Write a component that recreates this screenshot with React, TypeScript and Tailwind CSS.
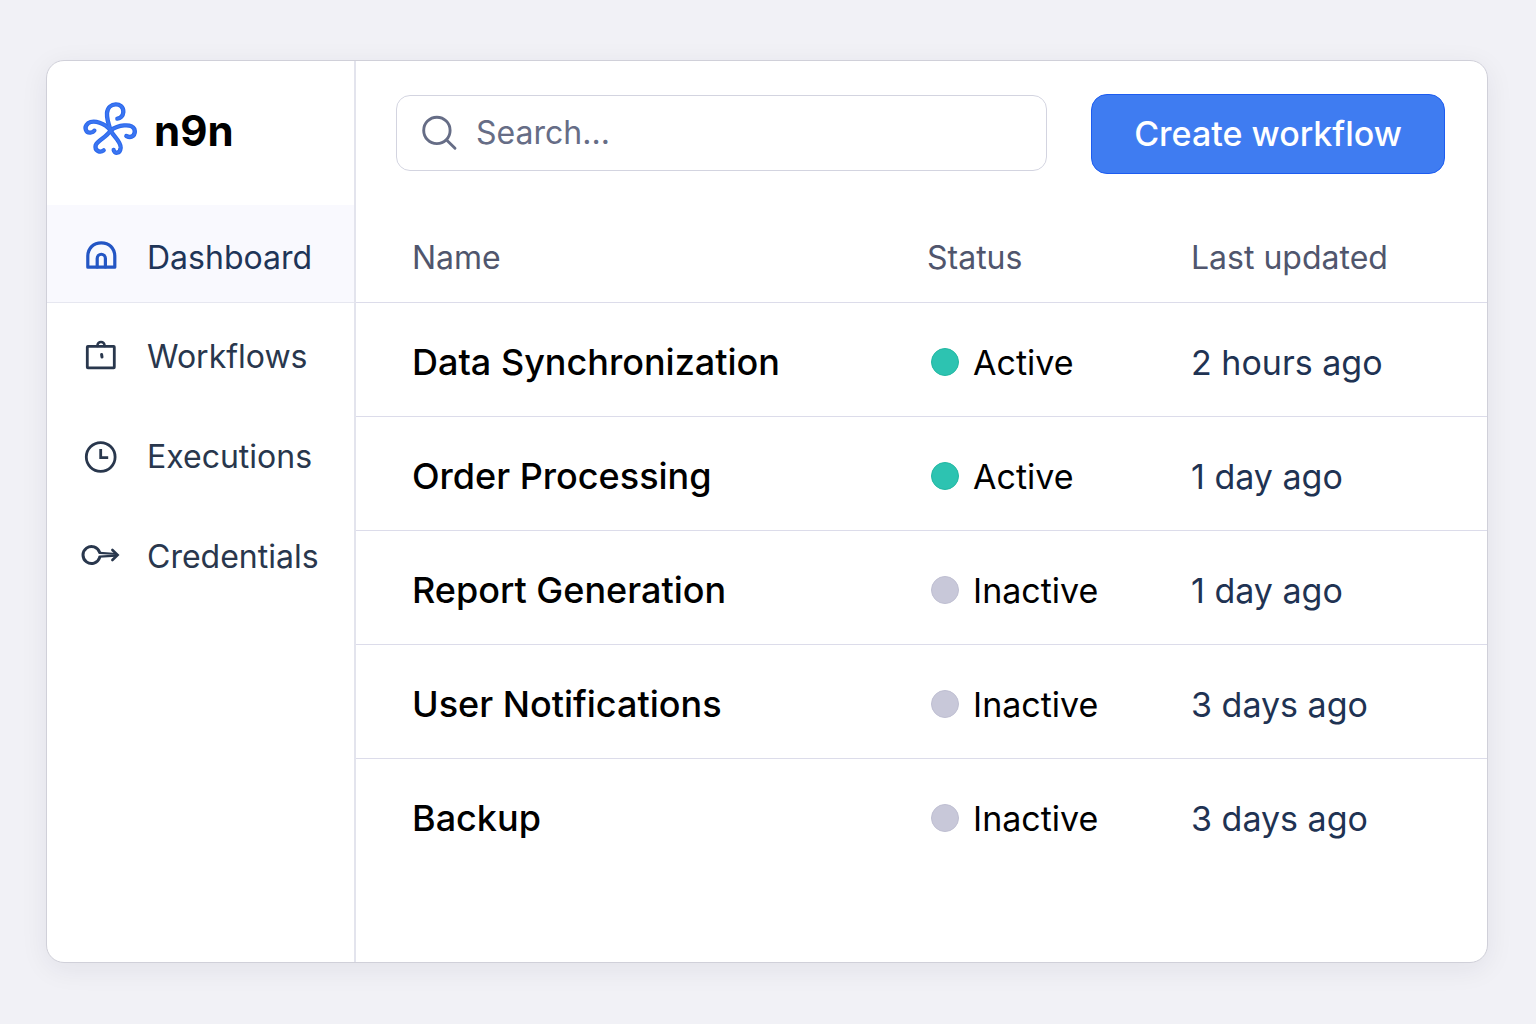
import type { ReactNode } from 'react';

const petals = [
  'M92 97C86 80 80 64 81 45C84 11 131 11 130 42C129 54 121 61 112 62',
  'M92 97C76 77 42 63 24 76C10 88 18 105 31 104C38 103 41 101 43 98',
  'M92 97C114 81 154 75 163 93C169 111 155 122 139 114',
  'M92 97C80 119 53 126 47 142C43 159 61 165 71 157',
  'M92 97C100 116 123 130 122 149C120 168 103 168 101 156',
];

function Logo() {
  return (
    <svg viewBox="12 15 156 156" className="size-[52px] shrink-0 overflow-visible" fill="none" strokeLinecap="round" strokeLinejoin="round" aria-hidden="true">
      <g stroke="#2b68ec" strokeWidth="13">
        {petals.map((d) => <path key={d} d={d} />)}
      </g>
      <g stroke="#3b75f1" strokeWidth="7">
        {petals.map((d) => <path key={d} d={d} />)}
      </g>
    </svg>
  );
}

function NavIcon({ children }: { children: ReactNode }) {
  return (
    <svg viewBox="0 0 40 40" className="size-10 shrink-0" fill="none" stroke="currentColor" strokeWidth="2.8" strokeLinecap="round" strokeLinejoin="round" aria-hidden="true">
      {children}
    </svg>
  );
}

const navItems = [
  {
    label: 'Dashboard',
    icon: (
      <g stroke="#2456c4" strokeWidth="3.2">
        <path d="M6.8 29.2V18.5C6.8 10 12.6 4.9 20.3 4.9S33.8 10 33.8 18.5V29.2Z" />
        <path d="M16.2 29V20.6C16.2 14.8 24.4 14.8 24.4 20.6V29" />
      </g>
    ),
  },
  {
    label: 'Workflows',
    icon: (
      <>
        <rect x="6.3" y="9.3" width="27" height="21.6" rx="0.6" />
        <path d="M16.4 9C16.4 3.6 23.6 3.6 23.6 9" strokeWidth="2.6" />
        <path d="M20.6 17.4L21 20" strokeWidth="3" />
      </>
    ),
  },
  {
    label: 'Executions',
    icon: (
      <>
        <circle cx="19.7" cy="20" r="14.4" />
        <path d="M19.7 12V20.6H27.2" strokeLinecap="butt" strokeLinejoin="miter" />
      </>
    ),
  },
  {
    label: 'Credentials',
    icon: (
      <>
        <path d="M18.6 15.4A8.5 8.5 0 1 0 18.6 20.6" strokeWidth="3" />
        <path d="M18.6 15.8L35 17M18.6 19.6L35 18.6" strokeWidth="2.2" />
        <path d="M31.4 13L36.6 18L31.4 23" strokeWidth="2.6" strokeLinejoin="miter" />
      </>
    ),
  },
];

const workflows = [
  { name: 'Data Synchronization', active: true, updated: '2 hours ago' },
  { name: 'Order Processing', active: true, updated: '1 day ago' },
  { name: 'Report Generation', active: false, updated: '1 day ago' },
  { name: 'User Notifications', active: false, updated: '3 days ago' },
  { name: 'Backup', active: false, updated: '3 days ago' },
];

function Sidebar() {
  return (
    <aside className="w-[309px] shrink-0 border-r-2 border-[#e3e4ed]">
      <div className="flex h-36 items-center gap-[18px] pl-[37px] pb-2">
        <Logo />
        <span className="pt-1 text-[42px] leading-[52px] font-bold text-black">n9n</span>
      </div>
      <nav>
        {navItems.map(({ label, icon }, i) => (
          <a
            key={label}
            href="#"
            aria-current={i === 0 ? 'page' : undefined}
            className={
              i === 0
                ? 'mb-1 flex h-[98px] items-center gap-[26px] border-b border-[#e6e7f0] bg-[#f9f9fe] pt-2 pl-[34px] text-[32px] text-[#1f3558]'
                : 'flex h-[100px] items-center gap-[26px] pl-[34px] text-[32px] text-[#29374d]'
            }
          >
            <NavIcon>{icon}</NavIcon>
            {label}
          </a>
        ))}
      </nav>
    </aside>
  );
}

export default function App() {
  return (
    <div className="flex min-h-screen bg-[#f1f1f6] pt-[60px] pr-12 pb-[61px] pl-[46px] font-['Inter',sans-serif]">
      <div className="flex flex-1 overflow-hidden rounded-[18px] border border-[#d0d0d9] bg-white shadow-[0_6px_28px_rgba(30,30,60,0.07)]">
        <Sidebar />
        <main className="min-w-0 flex-1">
          <header className="flex items-center gap-11 pt-[33px] pr-[42px] pb-10 pl-10">
            <label className="mb-0.5 flex h-[76px] min-w-0 flex-1 items-center gap-4 rounded-[14px] border border-[#d3d4e0] bg-white pl-[23px]">
              <svg viewBox="0 0 40 40" className="size-10 shrink-0" fill="none" stroke="#666d86" strokeWidth="2.9" strokeLinecap="round" aria-hidden="true">
                <circle cx="16.9" cy="17.4" r="13.2" />
                <path d="M26.6 27L35 35.2" />
              </svg>
              <input
                type="search"
                aria-label="Search workflows"
                placeholder="Search..."
                className="min-w-0 flex-1 bg-transparent text-[32px] text-[#1f3558] outline-none placeholder:text-[#666d86]"
              />
            </label>
            <button type="button" className="h-20 shrink-0 rounded-2xl border border-[#1d5cf0] bg-[#3f7cf1] px-[42px] pb-0.5 text-[34px] font-medium text-white">
              Create workflow
            </button>
          </header>
          <table className="w-full table-fixed text-left">
            <colgroup>
              <col />
              <col className="w-[264px]" />
              <col className="w-[298px]" />
            </colgroup>
            <thead>
              <tr className="h-[88px] border-b border-[#dcdcea] text-[32px] text-[#50566d]">
                <th className="pl-14 font-normal">Name</th>
                <th className="pl-0.5 font-normal">Status</th>
                <th className="pl-0.5 font-normal">Last updated</th>
              </tr>
            </thead>
            <tbody>
              {workflows.map(({ name, active, updated }) => (
                <tr key={name} className="h-[114px] border-b border-[#dcdcea] text-[34px] last:border-b-0">
                  <td className="pt-1.5 pl-14 text-[36px] font-medium text-black">{name}</td>
                  <td className="pt-1.5 text-black">
                    <span className="flex items-center gap-3.5 pl-1.5">
                      <span className={active ? 'size-7 rounded-full border border-[#22b8a2] bg-[#2dc3b1]' : 'size-7 rounded-full border border-[#bfbfd2] bg-[#c8c8d9]'} />
                      {active ? 'Active' : 'Inactive'}
                    </span>
                  </td>
                  <td className="pt-1.5 pl-0.5 text-[#1f3353]">{updated}</td>
                </tr>
              ))}
            </tbody>
          </table>
        </main>
      </div>
    </div>
  );
}
